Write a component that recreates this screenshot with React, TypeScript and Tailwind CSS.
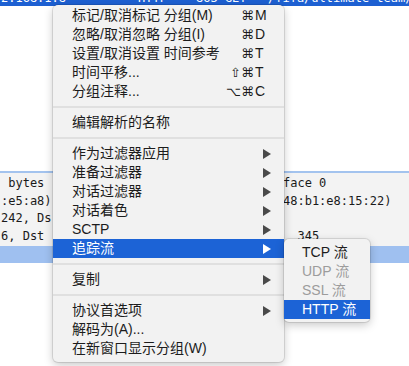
import React from "react";

type Item =
  | { sep: true }
  | { label: string; mods?: string; keyName?: string; arrow?: boolean; active?: boolean };

const menuItems: Item[] = [
  { label: "标记/取消标记 分组(M)", mods: "⌘", keyName: "M" },
  { label: "忽略/取消忽略 分组(I)", mods: "⌘", keyName: "D" },
  { label: "设置/取消设置 时间参考", mods: "⌘", keyName: "T" },
  { label: "时间平移...", mods: "⇧⌘", keyName: "T" },
  { label: "分组注释...", mods: "⌥⌘", keyName: "C" },
  { sep: true },
  { label: "编辑解析的名称" },
  { sep: true },
  { label: "作为过滤器应用", arrow: true },
  { label: "准备过滤器", arrow: true },
  { label: "对话过滤器", arrow: true },
  { label: "对话着色", arrow: true },
  { label: "SCTP", arrow: true },
  { label: "追踪流", arrow: true, active: true },
  { sep: true },
  { label: "复制", arrow: true },
  { sep: true },
  { label: "协议首选项", arrow: true },
  { label: "解码为(A)..." },
  { label: "在新窗口显示分组(W)" },
];

const subItems = [
  { label: "TCP 流", state: "normal" },
  { label: "UDP 流", state: "disabled" },
  { label: "SSL 流", state: "disabled" },
  { label: "HTTP 流", state: "active" },
];

// left part visible before the menu, right part after it (starts at column 39)
const paneLines: [string, string][] = [
  [" bytes", "face 0"],
  [":e5:a8)", "48:b1:e8:15:22)"],
  ["242, Ds", ""],
  ["6, Dst", "  345"],
];

const Arrow = () => (
  <svg width="8" height="10" viewBox="0 0 8 10" className="shrink-0">
    <path d="M0 0L8 5L0 10Z" fill="currentColor" />
  </svg>
);

export default function App() {
  return (
    <div className="relative w-[409px] h-[366px] overflow-hidden bg-white font-['Liberation_Sans','Noto_Sans_CJK_SC',sans-serif]">
      {/* packet list, selected row (only its bottom shows) */}
      <div className="h-[6px] overflow-hidden bg-[#1d60d2]">
        <div className="mt-[-9px] grid grid-cols-[137px_58px_72px_1fr] whitespace-pre pl-[1px] text-[12px] leading-[14px] text-white font-['DejaVu_Sans_Mono',monospace]">
          <span>2.168.1.8</span>
          <span>HTTP</span>
          <span>863 GET</span>
          <span>/fifa/ultimate-team/</span>
        </div>
      </div>
      <div className="h-[165px] bg-white" />
      <div className="h-[2px] bg-[#a3c3ee]" />

      {/* packet details */}
      <div className="h-[73px] bg-[#f3f3f3] pt-[2px] pl-[1px] text-[12px] text-[#1a1a1a] font-['DejaVu_Sans_Mono',monospace]">
        {paneLines.map(([l, r], i) => (
          <div key={i} className="grid h-[17.5px] grid-cols-[282px_1fr] leading-[17.5px] whitespace-pre">
            <span>{l}</span>
            <span>{r}</span>
          </div>
        ))}
      </div>
      <div className="h-[17px] bg-[#9fc0f0]" />

      {/* context menu */}
      <div className="absolute left-[53px] top-[5px] w-[231px] rounded-[5px] bg-[#f2f2f2] pt-[1px] pb-[4px] text-[14px] leading-[19px] text-[#1c1c1c] shadow-[0_3px_10px_rgba(0,0,0,0.22)] ring-1 ring-black/10">
        {menuItems.map((it, i) =>
          "sep" in it ? (
            <div key={i} className="py-[5px]">
              <div className="h-[2px] bg-[#e0e0e0]" />
            </div>
          ) : (
            <div
              key={i}
              className={`flex h-[19px] items-center pl-[19px] pr-[13px] ${
                it.active ? "bg-[#1c63d6] text-white" : ""
              }`}
            >
              <span className="flex-1 whitespace-nowrap">{it.label}</span>
              {it.keyName && (
                <span className="mr-[4px] flex items-center">
                  <span className="text-[13px] font-['DejaVu_Sans',sans-serif]">{it.mods}</span>
                  <span className="w-[13px] pl-[1px]">{it.keyName}</span>
                </span>
              )}
              {it.arrow && (
                <span className={it.active ? "text-white" : "text-[#4a4a4a]"}>
                  <Arrow />
                </span>
              )}
            </div>
          )
        )}
      </div>

      {/* submenu */}
      <div className="absolute left-[284px] top-[239px] w-[86px] rounded-[5px] bg-[#f2f2f2] pt-[4px] pb-[3px] text-[14px] leading-[19px] shadow-[0_3px_10px_rgba(0,0,0,0.22)] ring-1 ring-black/10">
        {subItems.map((s) => (
          <div
            key={s.label}
            className={`flex h-[19px] items-center pl-[18px] whitespace-nowrap ${
              s.state === "active"
                ? "bg-[#1c63d6] text-white"
                : s.state === "disabled"
                ? "text-[#9c9c9c]"
                : "text-[#1c1c1c]"
            }`}
          >
            {s.label}
          </div>
        ))}
      </div>
    </div>
  );
}
